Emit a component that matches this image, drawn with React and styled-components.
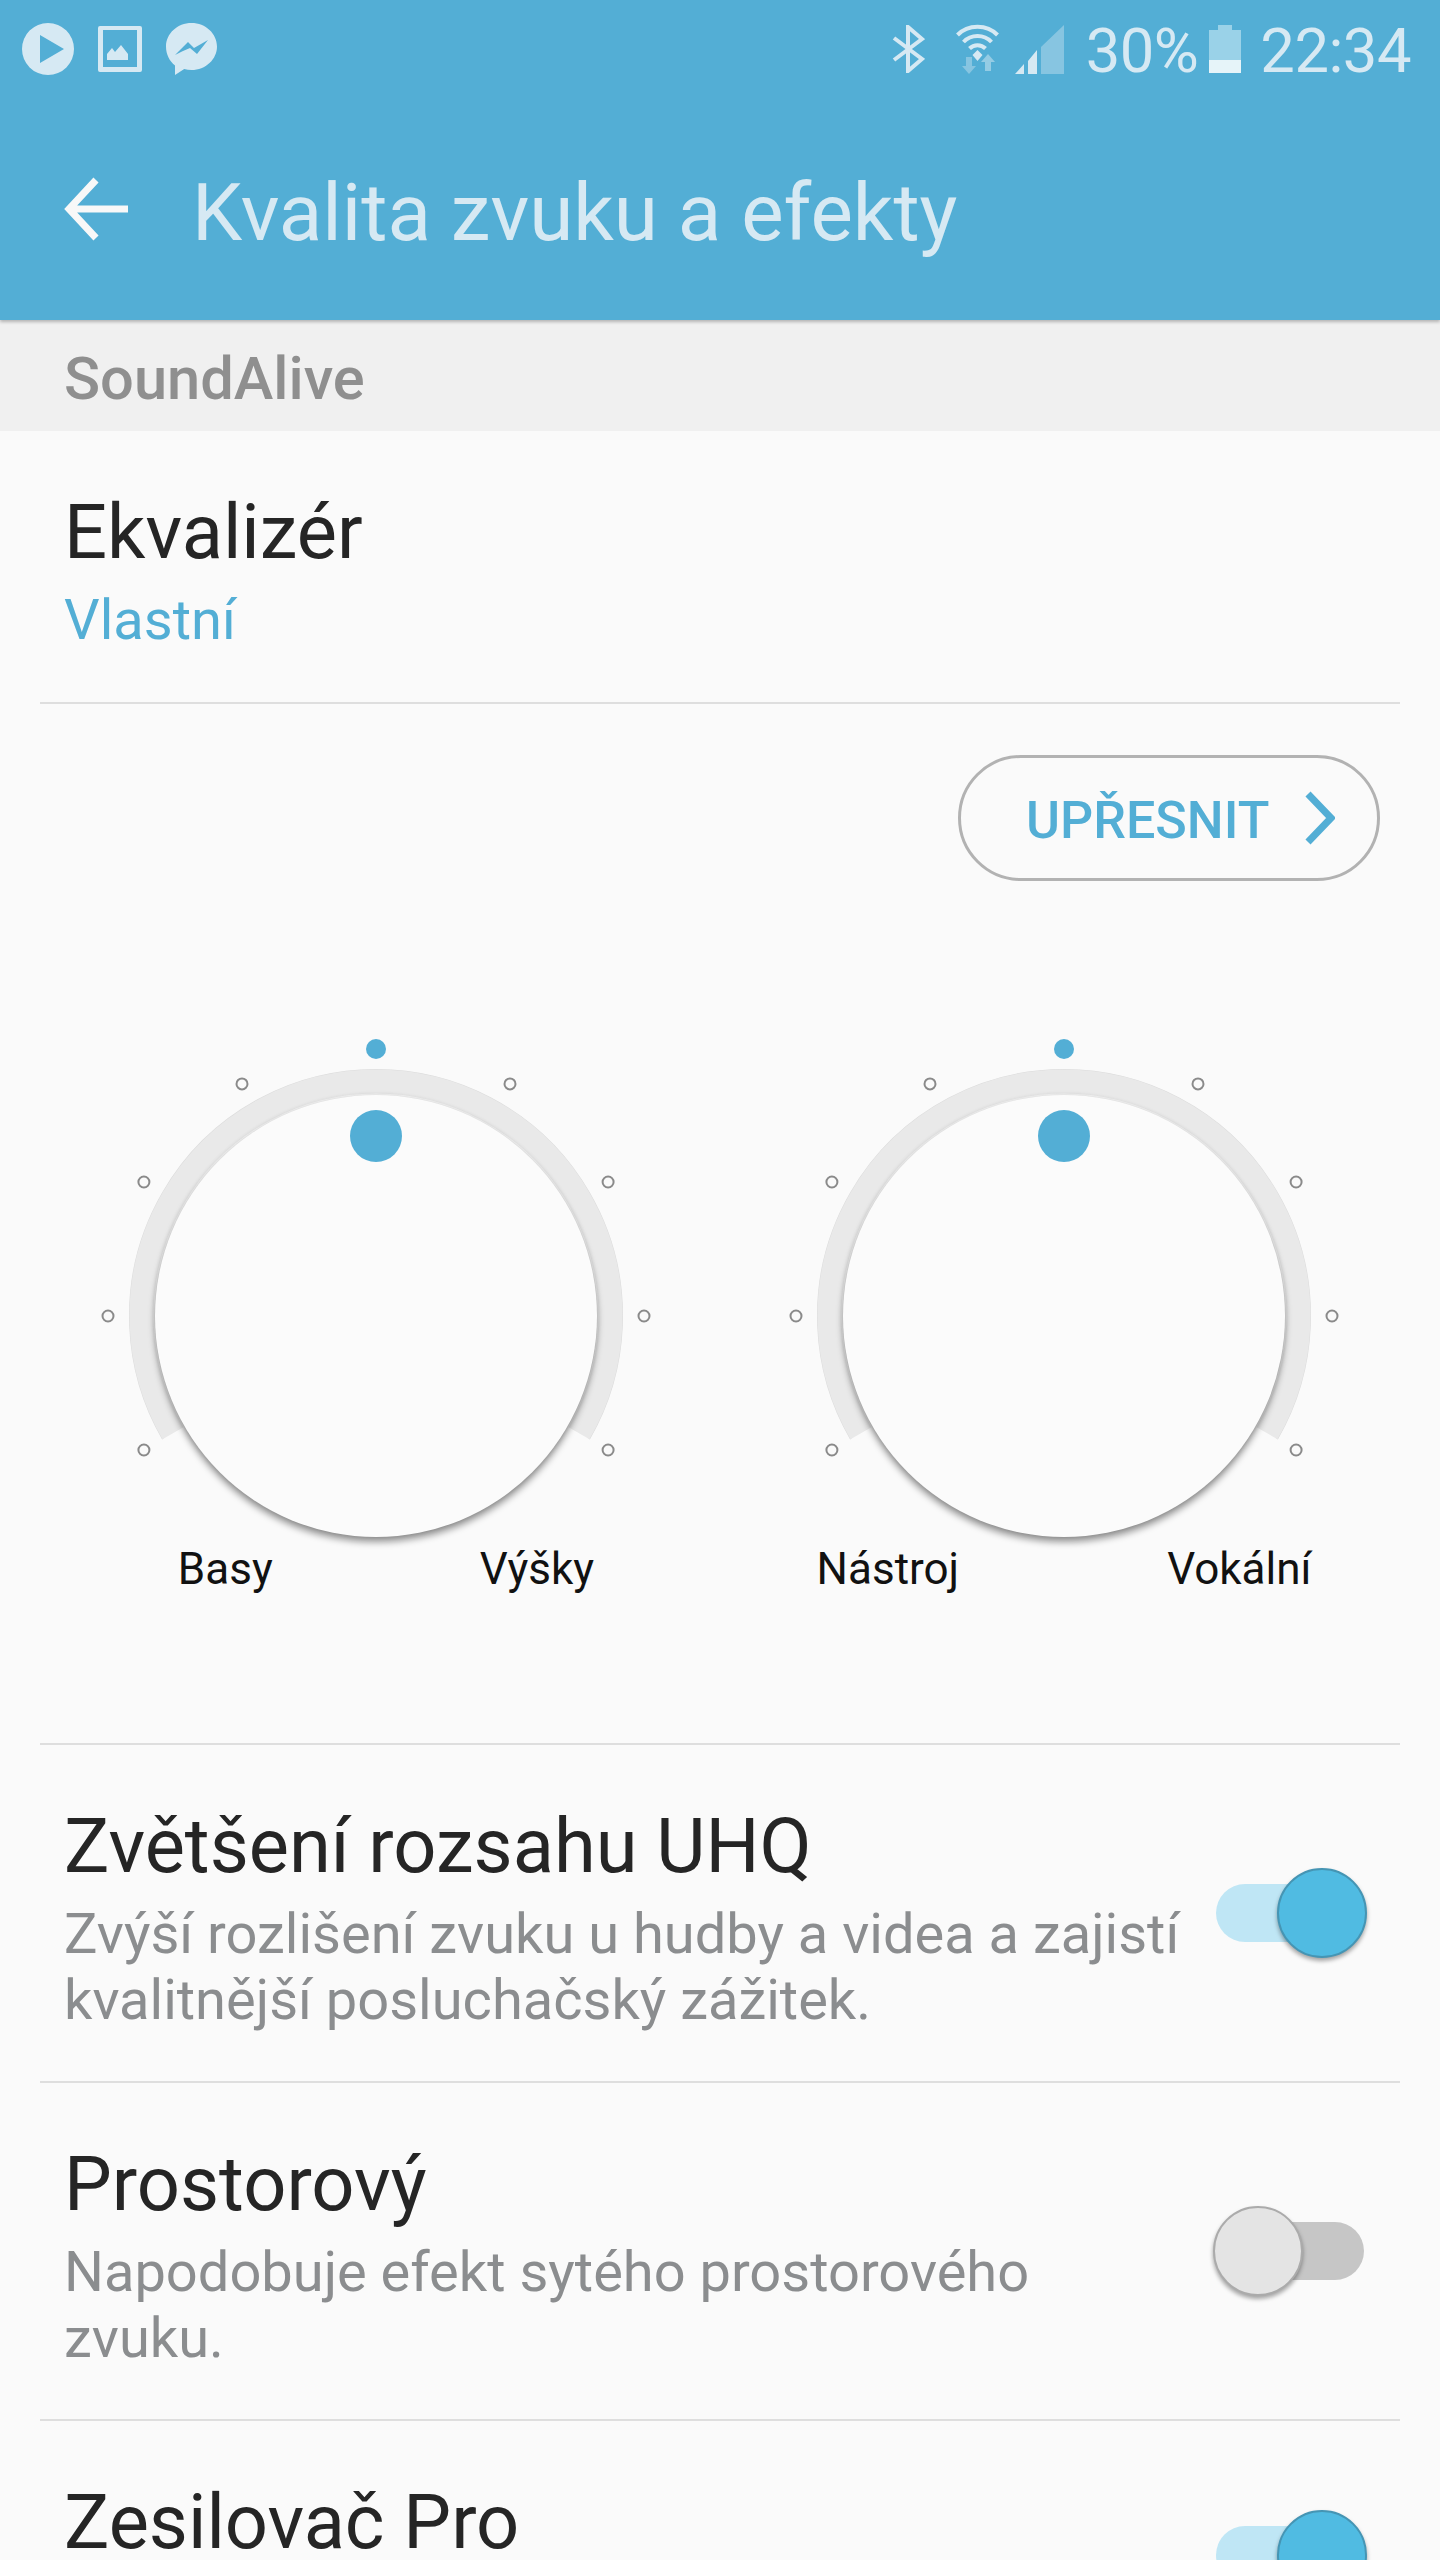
import React from "react";
import styled, { createGlobalStyle } from "styled-components";

const BLUE = "#53aed5";
const PALE = "#d6e9f3";

const GlobalStyle = createGlobalStyle`
  html, body {
    margin: 0;
    padding: 0;
    background: #fafafa;
  }
  body {
    font-family: Roboto, "Liberation Sans", sans-serif;
  }
`;

const Page = styled.div`
  width: 1440px;
  height: 2560px;
  overflow: hidden;
  background: #fafafa;
`;

const Header = styled.header`
  height: 320px;
  background: ${BLUE};
  box-shadow: 0 2px 3px rgba(0, 0, 0, 0.25);
  position: relative;
`;

const StatusBar = styled.div`
  height: 98px;
  display: flex;
  align-items: center;
  justify-content: space-between;
  padding: 0 29px 0 22px;
`;

const StatusGroup = styled.div`
  display: flex;
  align-items: center;
`;

const StatusIcon = styled.svg`
  display: block;
  flex: none;
  margin-left: ${(p) => p.$gap || 0}px;
`;

const StatusText = styled.span`
  font-size: 61.5px;
  line-height: 100px;
  margin-top: 4px;
  font-weight: 400;
  letter-spacing: -0.5px;
  color: ${PALE};
  margin-left: ${(p) => p.$gap || 0}px;
`;

const Toolbar = styled.div`
  height: 222px;
  display: flex;
  align-items: center;
  padding: 0 0 0 64px;
  box-sizing: border-box;
`;

const Title = styled.h1`
  margin: 7px 0 0 64px;
  font-size: 80px;
  line-height: 100px;
  font-weight: 400;
  color: ${PALE};
`;

const SectionBar = styled.div`
  height: 111px;
  box-sizing: border-box;
  padding: 26px 0 0 64px;
  background: #f0f0f0;
  font-size: 59.6px;
  line-height: 66px;
  font-weight: 500;
  color: #8f8f8f;
`;

const List = styled.div`
  padding: 0 40px;
`;

const Row = styled.div`
  min-height: ${(p) => p.$height}px;
  box-sizing: border-box;
  display: flex;
  align-items: center;
  justify-content: space-between;
  padding: ${(p) => p.$top}px 36px 0 24px;
  border-top: ${(p) => (p.$first ? "none" : "2px solid #dedede")};
`;

const RowText = styled.div`
  align-self: flex-start;
`;

const RowTitle = styled.div`
  font-size: 75.8px;
  line-height: 103px;
  margin-bottom: 3px;
  color: #252525;
`;

const RowSub = styled.div`
  font-size: 56px;
  line-height: 66px;
  color: ${BLUE};
`;

const RowDesc = styled.div`
  font-size: 56px;
  line-height: 66px;
  color: #8b8d8f;
`;

const Switch = styled.div`
  position: relative;
  flex: none;
  width: 148px;
  height: 58px;
  border-radius: 29px;
  margin-top: ${(p) => p.$offset}px;
  background: ${(p) => (p.$on ? "#bfe6f5" : "#c6c6c6")};
`;

const SwitchKnob = styled.div`
  position: absolute;
  top: -16px;
  left: ${(p) => (p.$on ? "61px" : "-3px")};
  width: 90px;
  height: 90px;
  box-sizing: border-box;
  border-radius: 50%;
  background: ${(p) => (p.$on ? "#50bbe2" : "#e4e4e4")};
  border: 2px solid ${(p) => (p.$on ? "#4595b4" : "#ababab")};
  box-shadow: 0 3px 4px rgba(0, 0, 0, 0.35);
`;

const EqPanel = styled.section`
  border-top: 2px solid #dedede;
  height: 1041px;
  box-sizing: border-box;
  padding-top: 51px;
`;

const ButtonRow = styled.div`
  display: flex;
  justify-content: flex-end;
  padding-right: 20px;
`;

const RefineButton = styled.button`
  width: 422px;
  height: 126px;
  box-sizing: border-box;
  display: flex;
  align-items: center;
  padding: 4px 0 0 65px;
  border: 3px solid #b2b2b2;
  border-radius: 63px;
  background: transparent;
  font-family: inherit;
  font-size: 52px;
  font-weight: 500;
  color: ${BLUE};
`;

const ChevronIcon = styled.svg`
  display: block;
  margin: -4px 0 0 36px;
`;

const Dials = styled.div`
  display: grid;
  grid-template-columns: 560px 560px;
  column-gap: 128px;
  margin: 155px 0 0 56px;
`;

const DialBlock = styled.div`
  display: flex;
  flex-direction: column;
`;

const DialFace = styled.div`
  position: relative;
  width: 560px;
  height: 507px;
`;

const DialDrawing = styled.svg`
  position: absolute;
  top: 0;
  left: 0;
`;

const Disc = styled.div`
  position: absolute;
  top: 59px;
  left: 59px;
  width: 442px;
  height: 442px;
  border-radius: 50%;
  background: #fbfbfb;
  box-shadow: 0 5px 7px rgba(0, 0, 0, 0.4), 0 0 5px rgba(0, 0, 0, 0.14);
`;

const DiscKnob = styled.div`
  position: absolute;
  top: 15px;
  left: 195px;
  width: 52px;
  height: 52px;
  border-radius: 50%;
  background: ${BLUE};
`;

const DialLabels = styled.div`
  display: flex;
  justify-content: center;
  gap: ${(p) => p.$gap}px;
  margin-left: ${(p) => p.$shift}px;
  font-size: 44px;
  line-height: 52px;
  color: #111;
`;

const ticks = [-120, -90, -60, -30, 0, 30, 60, 90, 120];
const polar = (deg, r) => {
  const a = ((deg - 90) * Math.PI) / 180;
  return [280 + r * Math.cos(a), 280 + r * Math.sin(a)];
};

function Dial({ left, right, gap, shift }) {
  const [sx, sy] = polar(-120, 234.5);
  const [ex, ey] = polar(120, 234.5);
  const [ox, oy] = polar(-120, 246);
  const [px, py] = polar(120, 246);
  return (
    <DialBlock>
      <DialFace>
        <DialDrawing width="560" height="560" viewBox="0 0 560 560">
          <path d={`M${ox} ${oy}A246 246 0 1 1 ${px} ${py}`} fill="none" stroke="#dcdcdc" strokeWidth="2" />
          <path d={`M${sx} ${sy}A234.5 234.5 0 1 1 ${ex} ${ey}`} fill="none" stroke="#e9e9e9" strokeWidth="24" />
          {ticks.map((t) => {
            const [x, y] = polar(t, t === 0 ? 267 : 268);
            return t === 0 ? (
              <circle key={t} cx={x} cy={y} r="10" fill={BLUE} />
            ) : (
              <circle key={t} cx={x} cy={y} r="5.5" fill="none" stroke="#8a8a8a" strokeWidth="2" />
            );
          })}
        </DialDrawing>
        <Disc>
          <DiscKnob />
        </Disc>
      </DialFace>
      <DialLabels $gap={gap} $shift={shift}>
        <span>{left}</span>
        <span>{right}</span>
      </DialLabels>
    </DialBlock>
  );
}

function PlayIcon() {
  return (
    <StatusIcon width="52" height="52" viewBox="0 0 52 52">
      <path fill={PALE} fillRule="evenodd" d="M26 0a26 26 0 1 1 0 52a26 26 0 1 1 0-52zM18 12v28l24-14z" />
    </StatusIcon>
  );
}

function ImageIcon() {
  return (
    <StatusIcon $gap={24} width="44" height="46" viewBox="0 0 44 46">
      <path fill={PALE} fillRule="evenodd" d="M2 0h40a2 2 0 0 1 2 2v42a2 2 0 0 1-2 2H2a2 2 0 0 1-2-2V2a2 2 0 0 1 2-2zM5 4v37h34V4zM9 34v-6l5-6 3 4 6-7 7 9v6z" />
    </StatusIcon>
  );
}

function MessengerIcon() {
  return (
    <StatusIcon $gap={24} width="51" height="52" viewBox="0 0 51 52">
      <path fill={PALE} fillRule="evenodd" d="M25.500 0C39.600 0 51 10.600 51 23.500S39.600 47 25.500 47c-2.500 0-5-.3-7.300-1L9 52v-9.500C3.500 38.200 0 31.300 0 23.500 0 10.600 11.400 0 25.500 0zM9 32l13-13 6 6 14-8-11 14-7-6-7 3z" />
    </StatusIcon>
  );
}

function BluetoothIcon() {
  return (
    <StatusIcon width="33" height="48" viewBox="0 0 33 48">
      <path fill="none" stroke={PALE} strokeWidth="4" d="M2 13l28 21-14 12V2l14 12L2 35" />
    </StatusIcon>
  );
}

function WifiIcon() {
  return (
    <StatusIcon $gap={31} width="43" height="50" viewBox="0 0 43 50">
      <g fill="none" stroke={PALE} strokeWidth="4">
        <path d="M1.500 11C12 0 31 0 41.500 11" />
        <path d="M7.500 18C15 10 28 10 35.500 18" />
        <path d="M13.500 24.500C18 20 25 20 29.500 24.500" />
      </g>
      <path fill={PALE} d="M21.500 26l5 5-5 6-5-6z" />
      <path fill={PALE} opacity="0.4" d="M10 33h6v9h4l-7 8-7-8h4z" />
      <path fill={PALE} opacity="0.5" d="M29 47h6v-9h4l-7-8-7 8h4z" />
    </StatusIcon>
  );
}

function SignalIcon() {
  return (
    <StatusIcon $gap={16} width="49" height="49" viewBox="0 0 49 49">
      <path fill={PALE} opacity="0.4" d="M26 22L49 0v49H26z" />
      <path fill={PALE} d="M13 36l9-11v24h-9zM0 49l9-10v10z" />
    </StatusIcon>
  );
}

function BatteryIcon() {
  return (
    <StatusIcon $gap={11} width="32" height="48" viewBox="0 0 32 48">
      <path fill="#9ad2e8" d="M9 0h14v5h9v31H0V5h9z" />
      <rect y="35" width="32" height="13" fill="#e6f4f9" />
    </StatusIcon>
  );
}

function Toggle({ on, offset = 0 }) {
  return (
    <Switch $on={on} $offset={offset}>
      <SwitchKnob $on={on} />
    </Switch>
  );
}

export default function App() {
  return (
    <Page>
      <GlobalStyle />
      <Header>
        <StatusBar>
          <StatusGroup>
            <PlayIcon />
            <ImageIcon />
            <MessengerIcon />
          </StatusGroup>
          <StatusGroup>
            <BluetoothIcon />
            <WifiIcon />
            <SignalIcon />
            <StatusText $gap={22}>30%</StatusText>
            <BatteryIcon />
            <StatusText $gap={19}>22:34</StatusText>
          </StatusGroup>
        </StatusBar>
        <Toolbar>
          <svg width="64" height="64" viewBox="0 0 64 64">
            <path d="M64 32H5M32 3L5 32l27 29" fill="none" stroke="#f8f8f8" strokeWidth="7" />
          </svg>
          <Title>Kvalita zvuku a efekty</Title>
        </Toolbar>
      </Header>
      <SectionBar>SoundAlive</SectionBar>
      <List>
        <Row $first $height={271} $top={50}>
          <RowText>
            <RowTitle>Ekvalizér</RowTitle>
            <RowSub>Vlastní</RowSub>
          </RowText>
        </Row>
        <EqPanel>
          <ButtonRow>
            <RefineButton>
              UPŘESNIT
              <ChevronIcon width="30" height="54" viewBox="0 0 30 54">
                <path d="M3 3l23 24L3 51" fill="none" stroke={BLUE} strokeWidth="7" />
              </ChevronIcon>
            </RefineButton>
          </ButtonRow>
          <Dials>
            <Dial left="Basy" right="Výšky" gap={207} shift={20} />
            <Dial left="Nástroj" right="Vokální" gap={208} shift={0} />
          </Dials>
        </EqPanel>
        <Row $height={338} $top={50}>
          <RowText>
            <RowTitle>Zvětšení rozsahu UHQ</RowTitle>
            <RowDesc>
              Zvýší rozlišení zvuku u hudby a videa a zajistí
              <br />
              kvalitnější posluchačský zážitek.
            </RowDesc>
          </RowText>
          <Toggle on offset={-50} />
        </Row>
        <Row $height={338} $top={50}>
          <RowText>
            <RowTitle>Prostorový</RowTitle>
            <RowDesc>
              Napodobuje efekt sytého prostorového
              <br />
              zvuku.
            </RowDesc>
          </RowText>
          <Toggle offset={-50} />
        </Row>
        <Row $height={270} $top={50}>
          <RowText>
            <RowTitle>Zesilovač Pro</RowTitle>
          </RowText>
          <Toggle on offset={-50} />
        </Row>
      </List>
    </Page>
  );
}
